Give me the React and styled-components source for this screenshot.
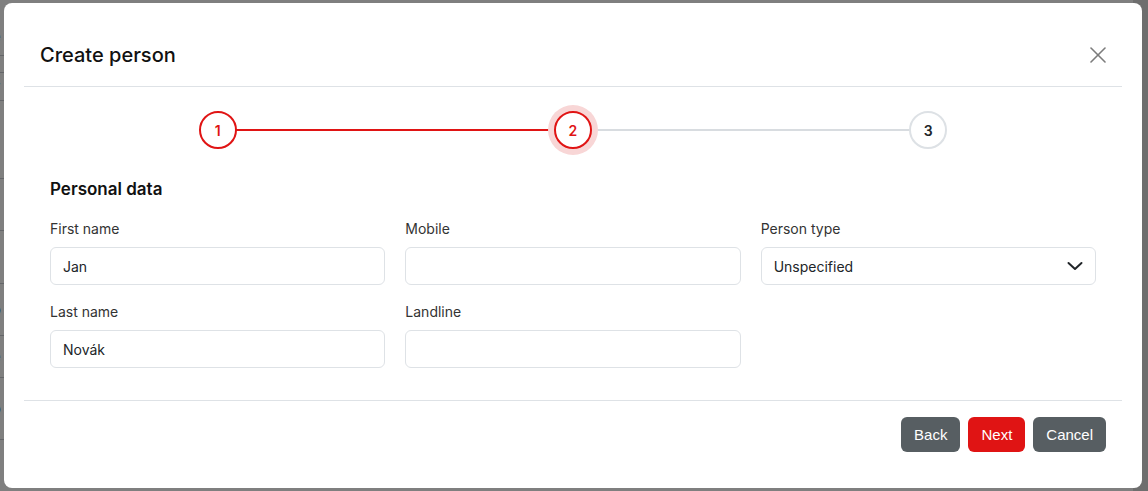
import React from 'react';
import styled, { createGlobalStyle } from 'styled-components';

const GlobalStyle = createGlobalStyle`
  html, body {
    margin: 0;
    padding: 0;
    font-family: Inter, "Noto Sans", sans-serif;
    color: #212529;
  }
  * { box-sizing: border-box; }
`;

const Page = styled.div`
  width: 1148px;
  height: 491px;
  display: flex;
  overflow: hidden;
  background: #ffffff;
`;

const PageMain = styled.div`
  flex: 1;
  display: flex;
  flex-direction: column;
  padding-top: 18px;
`;

const BgRow = styled.div`
  height: ${p => p.$h}px;
  border-bottom: 1px solid #c8cdd2;
  display: flex;
  align-items: center;
  font-size: 15px;
  color: ${p => p.$color || '#333'};
  font-weight: ${p => p.$bold ? 700 : 400};
  margin-left: -8px;
`;

const Scrollbar = styled.div`
  width: 15px;
  background: #dcdcdc;
`;

const Backdrop = styled.div`
  position: fixed;
  inset: 0;
  background: rgba(0, 0, 0, 0.5);
`;

const Modal = styled.div`
  position: fixed;
  left: 4px;
  top: 3px;
  width: 1138px;
  height: 485px;
  background: #fff;
  border-radius: 8px;
  padding: 0 20px;
  display: flex;
  flex-direction: column;
`;

const Header = styled.div`
  height: 84px;
  padding: 20px 16px 0;
  display: flex;
  align-items: center;
  justify-content: space-between;
  border-bottom: 1px solid #dee2e6;
`;

const Title = styled.h2`
  margin: 0;
  font-size: 20px;
  font-weight: 500;
  color: #111;
`;

const CloseButton = styled.button`
  border: 0;
  background: none;
  padding: 0;
  width: 16px;
  height: 16px;
  display: flex;
  color: #7c7c7c;
  cursor: pointer;
`;

const Body = styled.div`
  padding: 24px 26px 32px;
  border-bottom: 1px solid #dee2e6;
`;

const Stepper = styled.div`
  display: grid;
  grid-template-columns: repeat(3, 1fr);
  column-gap: 20px;
`;

const StepCell = styled.div`
  display: flex;
  justify-content: center;
  position: relative;
`;

const Connector = styled.div`
  position: absolute;
  top: 18px;
  left: 50%;
  width: calc(100% + 20px);
  height: 2px;
  background: ${p => p.$done ? '#e01414' : '#d8dce0'};
`;

const StepCircle = styled.div`
  position: relative;
  z-index: 1;
  width: 38px;
  height: 38px;
  border-radius: 50%;
  background: #fff;
  border: 2px solid ${p => p.$state === 'todo' ? '#dde1e5' : '#e01414'};
  color: ${p => p.$state === 'todo' ? '#212529' : '#e01414'};
  box-shadow: ${p => p.$state === 'current' ? '0 0 0 6px #f8d6d6' : 'none'};
  display: flex;
  align-items: center;
  justify-content: center;
  font-size: 14px;
  font-weight: 600;
`;

const SectionTitle = styled.h3`
  margin: 28px 0 18px;
  font-size: 17px;
  line-height: 24px;
  font-weight: 600;
  color: #111;
`;

const FormGrid = styled.div`
  display: grid;
  grid-template-columns: repeat(3, 1fr);
  column-gap: 20px;
  row-gap: 17px;
`;

const Field = styled.div`
  display: flex;
  flex-direction: column;
  gap: 8px;
`;

const Label = styled.label`
  font-size: 14px;
  line-height: 20px;
  color: #333;
`;

const Input = styled.div`
  height: 38px;
  border: 1px solid #dee2e6;
  border-radius: 6px;
  padding: 0 12px;
  display: flex;
  align-items: center;
  justify-content: space-between;
  font-size: 14px;
  color: #212529;
`;

const Footer = styled.div`
  display: flex;
  justify-content: flex-end;
  gap: 8px;
  padding: 16px 16px 0;
`;

const Button = styled.button`
  height: 35px;
  padding: 0 13px;
  border: 0;
  border-radius: 6px;
  background: ${p => p.$primary ? '#e01414' : '#575e62'};
  color: #fff;
  font-family: "Liberation Sans", Arial, sans-serif;
  font-size: 15px;
  cursor: pointer;
`;

const Chevron = () => (
  <svg width="16" height="16" viewBox="0 0 16 16" fill="none" stroke="#212529" strokeWidth="2" strokeLinecap="round" strokeLinejoin="round">
    <polyline points="1.5 5 8 11 14.5 5" />
  </svg>
);

const bgRows = [
  { h: 38, t: 'e' },
  { h: 17, t: '' },
  { h: 28, t: 'v', color: '#2a6fb0' },
  { h: 78, t: 'r', bold: true },
  { h: 52, t: '' },
  { h: 53, t: '' },
  { h: 52, t: 'o' },
  { h: 42, t: 'e' },
  { h: 62, t: 'o' },
];

const steps = ['done', 'current', 'todo'];

const fields = [
  { label: 'First name', value: 'Jan' },
  { label: 'Mobile', value: '' },
  { label: 'Person type', value: 'Unspecified', select: true },
  { label: 'Last name', value: 'Novák' },
  { label: 'Landline', value: '' },
];

export default function App() {
  return (
    <>
      <GlobalStyle />
      <Page>
        <PageMain>
          {bgRows.map((r, i) => (
            <BgRow key={i} $h={r.h} $color={r.color} $bold={r.bold}>{r.t}</BgRow>
          ))}
        </PageMain>
        <Scrollbar />
      </Page>
      <Backdrop />
      <Modal>
        <Header>
          <Title>Create person</Title>
          <CloseButton aria-label="Close">
            <svg width="16" height="16" viewBox="0 0 16 16" fill="none" stroke="currentColor" strokeWidth="1.6" strokeLinecap="round">
              <line x1="1" y1="1" x2="15" y2="15" />
              <line x1="15" y1="1" x2="1" y2="15" />
            </svg>
          </CloseButton>
        </Header>
        <Body>
          <Stepper>
            {steps.map((s, i) => (
              <StepCell key={i}>
                {i < steps.length - 1 && <Connector $done={s === 'done'} />}
                <StepCircle $state={s}>{i + 1}</StepCircle>
              </StepCell>
            ))}
          </Stepper>
          <SectionTitle>Personal data</SectionTitle>
          <FormGrid>
            {fields.map(f => (
              <Field key={f.label}>
                <Label>{f.label}</Label>
                <Input>
                  <span>{f.value}</span>
                  {f.select && <Chevron />}
                </Input>
              </Field>
            ))}
          </FormGrid>
        </Body>
        <Footer>
          <Button>Back</Button>
          <Button $primary>Next</Button>
          <Button>Cancel</Button>
        </Footer>
      </Modal>
    </>
  );
}
